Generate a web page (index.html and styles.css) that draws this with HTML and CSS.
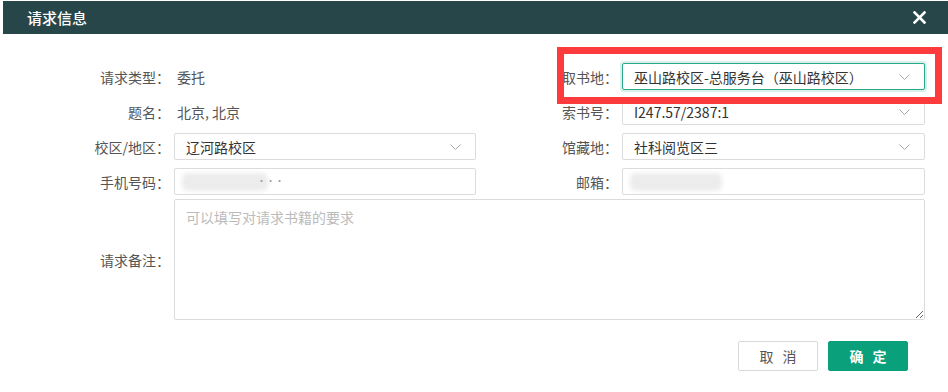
FILE: index.html
```html
<!DOCTYPE html>
<html lang="zh-CN">
<head>
  <meta charset="UTF-8">
  <title>请求信息</title>
  <link rel="stylesheet" href="styles.css">
</head>
<body>
  <div class="dialog">
    <div class="dialog-header">
      <span class="dialog-title">请求信息</span>
      <span class="dialog-close">
        <svg width="13" height="13" viewBox="0 0 13 13"><path d="M1.5 1.5 L11.5 11.5 M11.5 1.5 L1.5 11.5" stroke="#fff" stroke-width="2.6" stroke-linecap="square"/></svg>
      </span>
    </div>

    <div class="dialog-body">
      <div class="form-grid">
        <label class="form-label">请求类型：</label>
        <div class="form-text">委托</div>
        <label class="form-label">取书地：</label>
        <div class="select focused">
          <span>巫山路校区-总服务台（巫山路校区）</span>
          <svg class="chevron" width="11" height="6" viewBox="0 0 11 6"><path d="M0.5 0.5 L5.5 5.5 L10.5 0.5" fill="none" stroke="#a8a8a8" stroke-width="1"/></svg>
        </div>

        <label class="form-label">题名：</label>
        <div class="form-text">北京, 北京</div>
        <label class="form-label">索书号：</label>
        <div class="select">
          <span>I247.57/2387:1</span>
          <svg class="chevron" width="11" height="6" viewBox="0 0 11 6"><path d="M0.5 0.5 L5.5 5.5 L10.5 0.5" fill="none" stroke="#a8a8a8" stroke-width="1"/></svg>
        </div>

        <label class="form-label">校区/地区：</label>
        <div class="select">
          <span>辽河路校区</span>
          <svg class="chevron" width="11" height="6" viewBox="0 0 11 6"><path d="M0.5 0.5 L5.5 5.5 L10.5 0.5" fill="none" stroke="#a8a8a8" stroke-width="1"/></svg>
        </div>
        <label class="form-label">馆藏地：</label>
        <div class="select">
          <span>社科阅览区三</span>
          <svg class="chevron" width="11" height="6" viewBox="0 0 11 6"><path d="M0.5 0.5 L5.5 5.5 L10.5 0.5" fill="none" stroke="#a8a8a8" stroke-width="1"/></svg>
        </div>

        <label class="form-label">手机号码：</label>
        <div class="input">
          <span class="redacted phone"></span>
          <span class="dots">···</span>
        </div>
        <label class="form-label">邮箱：</label>
        <div class="input">
          <span class="redacted email"></span>
        </div>
      </div>

      <div class="note-row">
        <label class="form-label">请求备注：</label>
        <textarea class="note" placeholder="可以填写对请求书籍的要求"></textarea>
      </div>

      <div class="mark-box"></div>
    </div>

    <div class="dialog-footer">
      <button class="btn btn-cancel">取 消</button>
      <button class="btn btn-ok">确 定</button>
    </div>
  </div>
</body>
</html>
```

FILE: styles.css
```css
body {
  margin: 0;
  background-color: #fff;
  font-family: "Noto Sans CJK SC", "Noto Sans", sans-serif;
  font-size: 14px;
  color: #333;
}

.dialog {
  margin: 1px 0 0 3px;
  width: 945px;
}

.dialog-header {
  height: 33px;
  background-color: #27464a;
  display: flex;
  align-items: center;
  justify-content: space-between;
  padding: 0 22px 0 24px;
}

.dialog-title {
  color: #fff;
  font-size: 15px;
  font-weight: 500;
}

.dialog-close {
  display: flex;
}

.dialog-body {
  position: relative;
  padding-top: 29px;
}

.form-grid {
  display: grid;
  grid-template-columns: 167px 302px 138px 303px;
  grid-auto-rows: 27px;
  column-gap: 4px;
  row-gap: 8px;
}

.form-label {
  display: flex;
  align-items: center;
  justify-content: flex-end;
  color: #555;
  white-space: nowrap;
}

.form-text {
  display: flex;
  align-items: center;
  padding-left: 3px;
  color: #555;
}

.select, .input {
  box-sizing: border-box;
  height: 27px;
  border: 1px solid #dcdcdc;
  border-radius: 2px;
  display: flex;
  align-items: center;
  padding: 0 14px 0 11px;
  position: relative;
}

.select span {
  flex: 1;
  white-space: nowrap;
}

.select.focused {
  border-color: #2aa68a;
  box-shadow: 0 0 0 2px rgba(42, 166, 138, 0.18);
}

.redacted {
  display: block;
  height: 18px;
  background-color: #ececec;
  filter: blur(2px);
  border-radius: 6px;
}

.redacted.phone {
  width: 86px;
  margin-left: -4px;
}

.redacted.email {
  width: 92px;
  margin-left: -4px;
}

.dots {
  position: absolute;
  left: 82px;
  top: 5px;
  font-size: 9px;
  color: #999;
}

.note-row {
  display: grid;
  grid-template-columns: 167px 751px;
  column-gap: 4px;
  margin-top: 4px;
}

.note {
  box-sizing: border-box;
  height: 121px;
  border: 1px solid #dcdcdc;
  border-radius: 2px;
  padding: 7px 11px;
  font-family: inherit;
  font-size: 14px;
  color: #333;
  outline: none;
  resize: vertical;
}

.note::placeholder {
  color: #bbb;
}

.mark-box {
  position: absolute;
  left: 554px;
  top: 13px;
  width: 385px;
  height: 57px;
  box-sizing: border-box;
  border: 7px solid #fd3a3c;
}

.dialog-footer {
  display: flex;
  justify-content: flex-end;
  gap: 10px;
  padding: 21px 40px 0 0;
}

.btn {
  width: 80px;
  height: 30px;
  border-radius: 2px;
  font-family: inherit;
  font-size: 14px;
  letter-spacing: 3px;
  padding: 0 0 0 3px;
  cursor: pointer;
}

.btn-cancel {
  background-color: #fff;
  border: 1px solid #d9d9d9;
  color: #555;
}

.btn-ok {
  background-color: #0aa07c;
  border: 1px solid #0aa07c;
  color: #fff;
  font-weight: bold;
}
```
